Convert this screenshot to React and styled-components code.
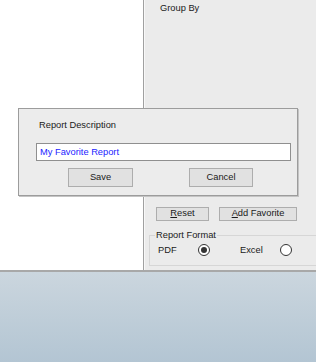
import React from "react";
import styled, { createGlobalStyle } from "styled-components";

const Global = createGlobalStyle`
  html, body {
    margin: 0;
    padding: 0;
    background: #b4c6d3;
  }
  * {
    box-sizing: border-box;
  }
`;

const Screen = styled.div`
  position: relative;
  width: 316px;
  height: 362px;
  display: flex;
  flex-direction: column;
  overflow: hidden;
  font-family: "Liberation Sans", Arial, sans-serif;
  font-size: 9.3px;
  color: #1a1a1a;
`;

const Workspace = styled.div`
  display: flex;
  height: 272px;
  border-bottom: 2px solid #a8a8a8;
`;

const LeftPane = styled.div`
  width: 144px;
  background: #ffffff;
  border-right: 1px solid #a0a0a0;
`;

const RightPane = styled.div`
  flex: 1;
  display: flex;
  flex-direction: column;
  background: #ebebeb;
  border-left: 1px solid #f8f8f8;
  padding: 2px 0 4px 5px;
`;

const Caption = styled.div`
  line-height: 12px;
  padding-left: ${(p) => p.$indent || 0}px;
`;

const Bottom = styled.div`
  margin-top: auto;
  display: flex;
  flex-direction: column;
`;

const ButtonRow = styled.div`
  display: flex;
  gap: ${(p) => p.$gap}px;
  padding-left: ${(p) => p.$indent}px;
`;

const WinButton = styled.div`
  width: ${(p) => p.$w}px;
  height: ${(p) => p.$h}px;
  display: flex;
  align-items: center;
  justify-content: center;
  background: #e1e1e1;
  border: 1px solid #adadad;
  color: #1a1a1a;
  line-height: 1;
  u {
    text-decoration: underline;
  }
`;

const Group = styled.fieldset`
  margin: 9px -4px 0 -1px;
  padding: 0 0 7px 8px;
  border: 1px solid #d6d6d6;
  border-right: none;
  height: 36px;
`;

const GroupLegend = styled.legend`
  padding: 0 1px;
  margin-left: -3px;
  line-height: 11px;
`;

const OptionRow = styled.div`
  display: flex;
  align-items: center;
  height: 16px;
  margin-top: 1px;
`;

const OptionLabel = styled.span`
  width: ${(p) => p.$w}px;
`;

const Radio = styled.span`
  width: 12px;
  height: 12px;
  border-radius: 50%;
  border: 1px solid #333333;
  background: #ffffff;
  display: flex;
  align-items: center;
  justify-content: center;
  margin-right: ${(p) => p.$after || 0}px;
  &::after {
    content: "";
    width: 6px;
    height: 6px;
    border-radius: 50%;
    background: ${(p) => (p.$on ? "#333333" : "transparent")};
  }
`;

const Desktop = styled.div`
  flex: 1;
  background: linear-gradient(#cbd6de, #b3c5d3);
`;

const Dialog = styled.div`
  position: absolute;
  left: 18px;
  top: 108px;
  width: 280px;
  height: 88px;
  background: #ececec;
  border: 1px solid #9c9c9c;
  box-shadow: 1px 1px 0 #c4c4c4;
  padding: 10px 0 0 0;
  display: flex;
  flex-direction: column;
`;

const TextBox = styled.div`
  margin: 12px 0 0 17px;
  width: 255px;
  height: 18px;
  background: #ffffff;
  border: 1px solid #8f8f8f;
  padding-left: 3px;
  display: flex;
  align-items: center;
  color: #2323ff;
`;

export default function App() {
  return (
    <Screen>
      <Global />
      <Workspace>
        <LeftPane />
        <RightPane>
          <Caption $indent={10}>Group By</Caption>
          <Bottom>
            <ButtonRow $indent={6} $gap={10}>
              <WinButton $w={53} $h={14}>
                <span>
                  <u>R</u>eset
                </span>
              </WinButton>
              <WinButton $w={78} $h={14}>
                <span>
                  <u>A</u>dd Favorite
                </span>
              </WinButton>
            </ButtonRow>
            <Group>
              <GroupLegend>Report Format</GroupLegend>
              <OptionRow>
                <OptionLabel $w={40}>PDF</OptionLabel>
                <Radio $on $after={30} />
                <OptionLabel $w={40}>Excel</OptionLabel>
                <Radio />
              </OptionRow>
            </Group>
          </Bottom>
        </RightPane>
      </Workspace>
      <Desktop />
      <Dialog>
        <Caption $indent={20}>Report Description</Caption>
        <TextBox>My Favorite Report</TextBox>
        <ButtonRow $indent={49} $gap={56} style={{ marginTop: 7 }}>
          <WinButton $w={65} $h={19}>Save</WinButton>
          <WinButton $w={64} $h={19}>Cancel</WinButton>
        </ButtonRow>
      </Dialog>
    </Screen>
  );
}
